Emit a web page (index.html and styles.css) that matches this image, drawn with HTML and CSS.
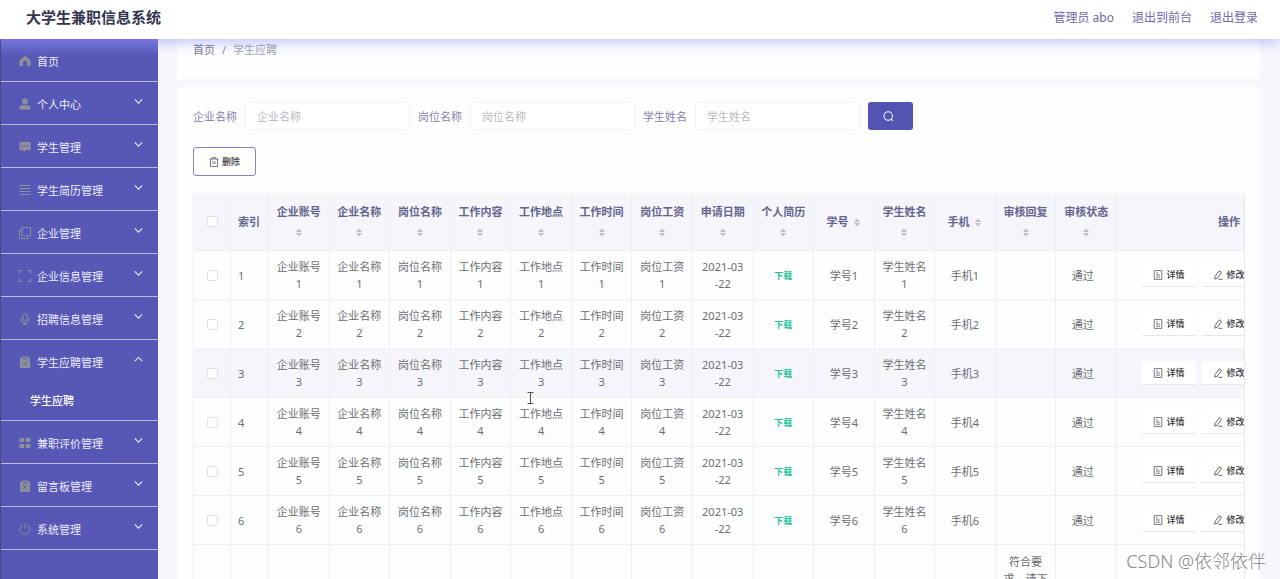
FILE: index.html
```html
<!DOCTYPE html>
<html lang="zh-CN">
<head>
<meta charset="utf-8">
<title>大学生兼职信息系统</title>
<link rel="stylesheet" href="styles.css">
</head>
<body>
<svg class="sprite" aria-hidden="true">
  <symbol id="home" viewBox="0 0 12 12"><path d="M6 .5 11.500 5.600V11H8V7.600a2 2 0 0 0-4 0V11H.5V5.600z" fill="currentColor"/></symbol>
  <symbol id="user" viewBox="0 0 12 12"><circle cx="6" cy="3.4" r="2.9" fill="currentColor"/><path d="M.5 11.5V10c0-1.700 1-2.700 2.700-2.700h5.600c1.700 0 2.700 1 2.700 2.700v1.500z" fill="currentColor"/></symbol>
  <symbol id="chat" viewBox="0 0 12 12"><path fill-rule="evenodd" d="M.5 1h11v8H6.800L4.500 11.200V9h-4zM2.600 4.300v1.400H4V4.300zm2.700 0v1.400h1.400V4.300zm2.700 0v1.400h1.400V4.300z" fill="currentColor"/></symbol>
  <symbol id="list" viewBox="0 0 12 12"><path d="M.5 1.500h11M.5 4.500h11M.5 7.500h11M.5 10.500h11" stroke="currentColor" fill="none"/></symbol>
  <symbol id="copy" viewBox="0 0 12 12"><path d="M3 .500h8.500V9H3zM3 3H.5v8.500H9V9" stroke="currentColor" fill="none"/></symbol>
  <symbol id="frame" viewBox="0 0 12 12"><path d="M.5 3.500v-3h3M8.500.5h3v3M11.500 8.500v3h-3M3.500 11.500h-3v-3" stroke="currentColor" fill="none"/></symbol>
  <symbol id="mic" viewBox="0 0 12 12"><rect x="4" y=".5" width="4" height="7" rx="2" stroke="currentColor" fill="none"/><path d="M2 4.500V6a4 4 0 0 0 8 0V4.500M6 10v2M4 11.500h4" stroke="currentColor" fill="none"/></symbol>
  <symbol id="done" viewBox="0 0 12 12"><path d="M1 1.500h2.500V.5h5v1H11V12H1z" fill="currentColor"/><path d="m3.300 6.500 2 2 3.500-3.500M4 2.800h4" stroke="#5758b6" fill="none"/></symbol>
  <symbol id="grid" viewBox="0 0 12 12"><path d="M.5 1h4.700v4H.5zM6.800 1h4.700v4H6.800zM.5 7h4.700v4H.5zM6.800 7h4.700v4H6.800z" fill="currentColor"/></symbol>
  <symbol id="fail" viewBox="0 0 12 12"><path d="M1 1.500h2.500V.5h5v1H11V12H1z" fill="currentColor"/><path d="m4.200 5.500 3.600 3.600m0-3.600L4.200 9.100M4 2.800h4" stroke="#5758b6" fill="none"/></symbol>
  <symbol id="power" viewBox="0 0 12 12"><path d="M3.600 1.800a5 5 0 1 0 4.800 0M6 .5v5" stroke="currentColor" fill="none"/></symbol>
  <symbol id="down" viewBox="0 0 8 8"><path d="m.7 2.200 3.300 3.300 3.300-3.300" stroke="currentColor" stroke-width=".9" fill="none"/></symbol>
  <symbol id="up" viewBox="0 0 8 8"><path d="M.7 5.500 4 2.200l3.300 3.300" stroke="currentColor" stroke-width=".9" fill="none"/></symbol>
  <symbol id="search" viewBox="0 0 12 12"><circle cx="5.700" cy="5.500" r="4.600" stroke="currentColor" fill="none" stroke-width="1.100"/><path d="m8.700 8.700 2.200 2.200" stroke="currentColor" stroke-width="1.100"/></symbol>
  <symbol id="trash" viewBox="0 0 10 10"><path d="M.5 2h9M3.300 2V.6h3.400V2M1.500 2v7.500h7V2M4 4.200v3M6 4.200v3" stroke="currentColor" stroke-width=".8" fill="none"/></symbol>
  <symbol id="doc" viewBox="0 0 10 10"><path d="M1.200.6h7.600v8.800H1.200zM3 3h2M3 5h4M3 7.200h4" stroke="currentColor" stroke-width=".8" fill="none"/></symbol>
  <symbol id="edit" viewBox="0 0 10 10"><path d="M6.300.8 8.500 2.300 4.300 8.300 1.800 9.100 2 6.600zM5.500 9.300h3.800" stroke="currentColor" stroke-width=".9" fill="none"/></symbol>
  <symbol id="sort" viewBox="0 0 8 10"><path d="M4 .5 7.500 4.400h-7zM4 9.500.5 5.600h7z" fill="currentColor"/></symbol>
</svg>

<header class="topbar">
  <h1 class="brand">大学生兼职信息系统</h1>
  <nav class="account">
    <a href="#">管理员 abo</a>
    <a href="#">退出到前台</a>
    <a href="#">退出登录</a>
  </nav>
</header>

<div class="layout">
  <nav class="sidebar">
    <a class="item" href="#"><svg class="icon"><use href="#home"/></svg><span>首页</span></a>
    <button class="item"><svg class="icon"><use href="#user"/></svg><span>个人中心</span><svg class="arrow"><use href="#down"/></svg></button>
    <button class="item"><svg class="icon"><use href="#chat"/></svg><span>学生管理</span><svg class="arrow"><use href="#down"/></svg></button>
    <button class="item"><svg class="icon"><use href="#list"/></svg><span>学生简历管理</span><svg class="arrow"><use href="#down"/></svg></button>
    <button class="item"><svg class="icon"><use href="#copy"/></svg><span>企业管理</span><svg class="arrow"><use href="#down"/></svg></button>
    <button class="item"><svg class="icon"><use href="#frame"/></svg><span>企业信息管理</span><svg class="arrow"><use href="#down"/></svg></button>
    <button class="item"><svg class="icon"><use href="#mic"/></svg><span>招聘信息管理</span><svg class="arrow"><use href="#down"/></svg></button>
    <button class="item item-open"><svg class="icon"><use href="#done"/></svg><span>学生应聘管理</span><svg class="arrow"><use href="#up"/></svg></button>
    <a class="subitem" href="#">学生应聘</a>
    <button class="item"><svg class="icon"><use href="#grid"/></svg><span>兼职评价管理</span><svg class="arrow"><use href="#down"/></svg></button>
    <button class="item"><svg class="icon"><use href="#fail"/></svg><span>留言板管理</span><svg class="arrow"><use href="#down"/></svg></button>
    <button class="item"><svg class="icon"><use href="#power"/></svg><span>系统管理</span><svg class="arrow"><use href="#down"/></svg></button>
  </nav>

  <main class="content">
    <nav class="card crumbs"><a href="#">首页</a><span class="slash">/</span><span class="here">学生应聘</span></nav>
    <section class="card panel">
      <form class="filters">
        <label for="company">企业名称</label><input id="company" type="text" placeholder="企业名称">
        <label for="post">岗位名称</label><input id="post" type="text" placeholder="岗位名称">
        <label for="student">学生姓名</label><input id="student" type="text" placeholder="学生姓名">
        <button class="search" type="button" aria-label="搜索"><svg><use href="#search"/></svg></button>
      </form>
      <button class="remove" type="button"><svg><use href="#trash"/></svg>删除</button>
      <div class="table-wrap">
        <table>
          <colgroup><col class="col-check"><col class="col-index"><col span="14"><col class="col-ops"></colgroup>
          <thead><tr id="head"></tr></thead>
          <tbody id="rows"></tbody>
        </table>
      </div>
    </section>
  </main>
</div>

<svg class="pointer" viewBox="0 0 7 12" aria-hidden="true"><path d="M.5.5h6M.5 11.500h6M3.500.5v11" stroke="#555" fill="none"/></svg>
<div class="watermark">CSDN @依邻依伴</div>
<script src="script.js"></script>
</body>
</html>
```

FILE: styles.css
```css
* { box-sizing: border-box; }

body {
  margin: 0;
  height: 100vh;
  display: flex;
  flex-direction: column;
  overflow: hidden;
  background: #f6f7fc;
  color: #6c6d72;
  font-family: "Noto Sans", "Noto Sans CJK SC", sans-serif;
  font-size: 11px;
}

a { color: inherit; text-decoration: none; }
button, input { font: inherit; }
button { cursor: pointer; }
.sprite { display: none; }

.topbar {
  position: relative;
  z-index: 2;
  flex: none;
  display: flex;
  align-items: center;
  justify-content: space-between;
  height: 39px;
  padding: 0 22px 6px 26px;
  background: #fff;
  box-shadow: 0 1px 16px rgba(120, 120, 255, 0.6);
}
.brand { margin: 0; font-size: 15px; line-height: 22px; font-weight: 700; color: #33344f; }
.account { display: flex; gap: 18px; font-size: 12px; color: #6d68aa; }

.layout { flex: 1; display: flex; min-height: 0; overflow: hidden; }

.sidebar {
  flex: none;
  width: 158px;
  background: linear-gradient(#7476d6, #5758b6 16px);
  border-left: 1px solid #47488f;
  color: #ececfa;
}
.item {
  display: flex;
  align-items: center;
  gap: 6px;
  width: 100%;
  height: 43px;
  padding: 1px 15px 0 18px;
  border: 0;
  border-bottom: 1px solid #bcbcd6;
  background: none;
  color: inherit;
  text-align: left;
}
.item-open { border-bottom-color: transparent; }
.icon { width: 12px; height: 12px; color: #8e9099; }
.arrow { width: 9px; height: 9px; margin: 0 0 5px auto; }
.subitem {
  display: block;
  height: 38px;
  padding-left: 29px;
  border-bottom: 1px solid #bcbcd6;
  line-height: 36px;
  font-weight: 500;
  color: #fff;
}

.content {
  flex: 1;
  min-width: 0;
  display: flex;
  flex-direction: column;
  gap: 8px;
  padding: 0 20px 0 19px;
}
.card { background: #fefefe; padding: 15px 15px 0 16px; }
.crumbs { flex: none; display: flex; gap: 7px; height: 40px; padding-top: 2px; line-height: 17px; color: #777786; }
.slash { color: #8a8a98; }
.here { color: #a2a2b0; }
.panel { flex: 1; min-height: 0; overflow: hidden; }

.filters { display: flex; align-items: center; gap: 8px; margin-bottom: 17px; color: #8580b0; }
.filters input {
  width: 165px;
  height: 28px;
  padding: 0 11px;
  border: 1px solid #f0f0fa;
  border-radius: 3px;
  background: #fff;
  color: #6c6d72;
}
.filters input::placeholder { color: #b9b9c0; }
.search {
  display: flex;
  align-items: center;
  justify-content: center;
  width: 45px;
  height: 28px;
  padding: 0 4px 0 0;
  border: 0;
  border-radius: 3px;
  background: #5253b2;
  color: #fff;
}
.search svg { width: 11px; height: 11px; }
.remove {
  display: flex;
  align-items: center;
  justify-content: center;
  gap: 3px;
  width: 63px;
  height: 29px;
  margin-bottom: 17px;
  padding: 0;
  border: 1px solid #8584b9;
  border-radius: 3px;
  background: #fff;
  color: #333;
  font-size: 9px;
  font-weight: 500;
}
.remove svg, .op svg { width: 10px; height: 10px; color: #555; }

.table-wrap { overflow: hidden; border-right: 1px solid #e8e8f2; }
table { width: 100%; min-width: 1149px; table-layout: fixed; border-collapse: separate; border-spacing: 0; }
.col-check, .col-index { width: 38px; }
.col-ops { width: 225px; }
th, td {
  border: solid #eeeef5;
  border-width: 0 1px 1px 0;
  padding: 7px;
  line-height: 17px;
  text-align: center;
  overflow-wrap: anywhere;
}
th:first-child, td:first-child { border-left-width: 1px; }
th { height: 58px; padding: 8px 7px; line-height: 20px; background: #f6f5fb; color: #64648d; font-weight: 700; }
td { height: 49px; }
.index { text-align: left; }
.status { padding-right: 14px; }
.active td { background: #f5f5fb; }
.tall td { height: 98px; vertical-align: top; padding-top: 8px; }
.sort { width: 8px; height: 9px; margin-left: 2px; color: #c0c0c8; vertical-align: -1px; }
.wide .sort { margin-left: 0; }
input[type="checkbox"] {
  display: block;
  appearance: none;
  width: 11px;
  height: 11px;
  margin: 0 auto;
  border: 1px solid #e0e0e8;
  border-radius: 2px;
  background: #fff;
}
.download { color: #2abf9b; font-size: 9px; font-weight: 700; }
.ops { display: flex; gap: 6px; padding-left: 18px; }
.op {
  display: flex;
  align-items: center;
  justify-content: center;
  gap: 3px;
  width: 54px;
  height: 24px;
  padding: 0;
  border: 0;
  border-bottom: 1px solid #e6e6ec;
  background: #fff;
  color: #333;
  font-size: 9px;
  font-weight: 500;
}

.pointer { position: absolute; left: 527px; top: 392px; width: 7px; height: 12px; }
.watermark {
  position: absolute;
  right: 14px;
  bottom: 6px;
  font-size: 18px;
  line-height: 24px;
  font-weight: 300;
  color: #85858c;
}
```

FILE: script.js
```js
const fields = ["企业账号", "企业名称", "岗位名称", "工作内容", "工作地点", "工作时间", "岗位工资",
  "申请日期", "个人简历", "学号", "学生姓名", "手机", "审核回复", "审核状态"];
const sortIcon = '<svg class="sort"><use href="#sort"/></svg>';
const check = (label) => `<input type="checkbox" aria-label="${label}">`;

document.getElementById("head").innerHTML =
  `<th>${check("全选")}</th><th class="index">索引</th>` +
  fields.map((f) => `<th class="${f.length > 2 ? "wide" : ""}">${f} ${sortIcon}</th>`).join("") +
  "<th>操作</th>";

function cell(field, n) {
  if (field === "申请日期") return "<td>2021-03<br>-22</td>";
  if (field === "个人简历") return '<td><a class="download" href="#">下载</a></td>';
  if (field === "审核回复") return "<td></td>";
  if (field === "审核状态") return '<td class="status">通过</td>';
  return `<td>${field}${n}</td>`;
}

const ops = '<td><div class="ops">' +
  '<button class="op" type="button"><svg><use href="#doc"/></svg>详情</button>' +
  '<button class="op" type="button"><svg><use href="#edit"/></svg>修改</button></div></td>';

let html = "";
for (let n = 1; n <= 6; n++) {
  html += `<tr class="${n === 3 ? "active" : ""}"><td>${check("选择" + n)}</td><td class="index">${n}</td>` +
    fields.map((f) => cell(f, n)).join("") + ops + "</tr>";
}
html += '<tr class="tall"><td></td><td></td>' +
  fields.map((f) => (f === "审核回复" ? "<td>符合要求，请下</td>" : "<td></td>")).join("") + "<td></td></tr>";
document.getElementById("rows").innerHTML = html;
```
